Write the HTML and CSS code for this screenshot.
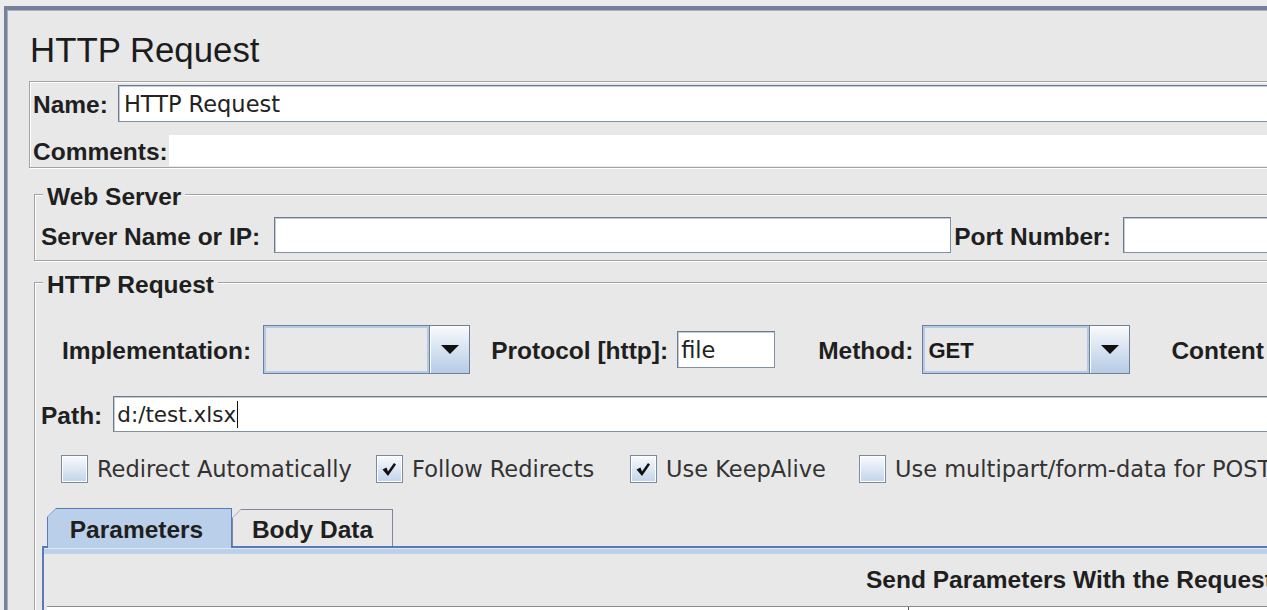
FILE: index.html
```html
<!DOCTYPE html>
<html>
<head>
<meta charset="utf-8">
<title>HTTP Request</title>
<link rel="stylesheet" href="styles.css">
</head>
<body>
<div class="frame">
  <h1 class="title">HTTP Request</h1>

  <div class="namebox">
    <div class="row name-row">
      <span class="lbl name-lbl">Name:</span>
      <div class="input grow name-input">HTTP Request</div>
    </div>
    <div class="row comments-row">
      <span class="lbl">Comments:</span>
      <div class="textarea grow"></div>
    </div>
  </div>

  <fieldset class="group web">
    <legend>Web Server</legend>
    <div class="row server-row">
      <span class="lbl">Server Name or IP:</span>
      <div class="input server-input"></div>
      <span class="lbl port-lbl">Port Number:</span>
      <div class="input grow port-input"></div>
    </div>
  </fieldset>

  <fieldset class="group req">
    <legend>HTTP Request</legend>
    <div class="row impl-row">
      <span class="lbl">Implementation:</span>
      <div class="combo impl-combo">
        <div class="combo-field"></div>
        <div class="combo-btn"><svg width="18" height="9" viewBox="0 0 18 9"><polygon points="0,0 18,0 9,9" fill="#111"/></svg></div>
      </div>
      <span class="lbl proto-lbl">Protocol [http]:</span>
      <div class="input proto-input">file</div>
      <span class="lbl method-lbl">Method:</span>
      <div class="combo method-combo">
        <div class="combo-field">GET</div>
        <div class="combo-btn"><svg width="18" height="9" viewBox="0 0 18 9"><polygon points="0,0 18,0 9,9" fill="#111"/></svg></div>
      </div>
      <span class="lbl content-lbl">Content Encoding:</span>
    </div>

    <div class="row path-row">
      <span class="lbl">Path:</span>
      <div class="input grow path-input">d:/test.xlsx<span class="caret"></span></div>
    </div>

    <div class="checks">
      <div class="check"><span class="cb"></span><span class="cb-text">Redirect Automatically</span></div>
      <div class="check"><span class="cb"><svg width="25" height="26" viewBox="0 0 25 26"><polygon points="5.5,13.5 9.5,11.5 11,15.5 17,7 19,8.5 11,20" fill="#111"/></svg></span><span class="cb-text">Follow Redirects</span></div>
      <div class="check"><span class="cb"><svg width="25" height="26" viewBox="0 0 25 26"><polygon points="5.5,13.5 9.5,11.5 11,15.5 17,7 19,8.5 11,20" fill="#111"/></svg></span><span class="cb-text">Use KeepAlive</span></div>
      <div class="check"><span class="cb"></span><span class="cb-text">Use multipart/form-data for POST</span></div>
    </div>

    <div class="tabs">
      <div class="tab selected"><div class="tab-in">Parameters</div></div>
      <div class="tab"><div class="tab-in">Body Data</div></div>
    </div>
    <div class="panel">
      <div class="strip"></div>
      <div class="send">Send Parameters With the Request:</div>
      <div class="table"><div class="col"></div></div>
    </div>
  </fieldset>
</div>
</body>
</html>
```

FILE: styles.css
```css
html, body {
  margin: 0;
  padding: 0;
  height: 610px;
  overflow: hidden;
  background: #ececec;
}

.frame {
  width: 1600px;
  height: 700px;
  margin: 6px 0 0 4px;
  border-top: 4px solid #75839a;
  border-left: 3px solid #75839a;
  background: #e8e8e8;
  box-shadow: inset 1px 1px 0 #a7b1bf;
}

.title {
  margin: 20px 0 0 23px;
  font: normal 34.8px/40px "Liberation Sans", Arial, sans-serif;
  color: #1c1c1c;
}

.row {
  display: flex;
  align-items: center;
}

.grow {
  flex: 1;
  min-width: 0;
}

.lbl {
  padding-top: 3px;
  font: bold 24.5px/28px "Liberation Sans", Arial, sans-serif;
  color: #1f1f1f;
  white-space: nowrap;
}

.input {
  box-sizing: border-box;
  height: 36px;
  background: #fff;
  border: 1px solid #8190a5;
  border-top-color: #6c7a8f;
  border-left-color: #6c7a8f;
  box-shadow: inset 1px 1px 0 #c3cbd6;
  padding: 0 4px;
  display: flex;
  align-items: center;
  font: 22.5px "DejaVu Sans", sans-serif;
  color: #222;
  white-space: nowrap;
}

/* Name / Comments box */
.namebox {
  margin: 11px 0 0 22px;
  padding: 3px 0 0 3px;
  height: 82px;
  border: 1px solid #a3a3a3;
  box-shadow: inset 1px 1px 0 #fff, 1px 1px 0 #fff;
}

.name-row {
  height: 37px;
}

.name-row .input {
  height: 37px;
  margin-left: 10px;
  padding-left: 5px;
}

.comments-row {
  margin-top: 13px;
  height: 31px;
}

.textarea {
  height: 31px;
  background: #fff;
  margin-left: 1px;
}

/* Titled groups */
.group {
  margin: 12px 0 0 27px;
  padding: 9px 0 7px 6px;
  border: 1px solid #a3a3a3;
  box-shadow: inset 1px 1px 0 #fff, 1px 1px 0 #fff;
  min-width: 0;
}

.group legend {
  margin-left: 2px;
  padding: 6px 4px 0;
  font: bold 24.5px/22px "Liberation Sans", Arial, sans-serif;
  color: #1f1f1f;
  background: #e8e8e8;
}

.web {
  margin-top: 12px;
}

.server-row {
  height: 36px;
}

.server-input {
  width: 677px;
  margin-left: 14px;
}

.port-lbl {
  margin-left: 3px;
}

.port-input {
  margin-left: 12px;
}

.req {
  margin-top: 7px;
  padding: 29px 0 0 6px;
  height: 600px;
}

/* Implementation row */
.impl-row {
  height: 49px;
  margin-left: 21px;
}

.combo {
  box-sizing: border-box;
  height: 49px;
  display: flex;
  border: 1px solid #6e8099;
  background: #e8e8e8;
}

.impl-combo {
  width: 207px;
  margin-left: 12px;
}

.method-combo {
  width: 208px;
  margin-left: 9px;
}

.combo-field {
  flex: 1;
  border: 2px solid #b4cbe6;
  display: flex;
  align-items: center;
  padding: 2px 0 0 3px;
  font: bold 22px "Liberation Sans", Arial, sans-serif;
  color: #1a1a1a;
}

.combo-btn {
  width: 39px;
  border-left: 1px solid #6e8099;
  background: linear-gradient(#f8fafd, #b6cbe5);
  box-shadow: inset 1px 1px 0 #fff;
  display: flex;
  align-items: center;
  justify-content: center;
}

.proto-lbl {
  margin-left: 21px;
}

.proto-input {
  width: 98px;
  height: 37px;
  margin-left: 9px;
  padding-left: 3px;
}

.method-lbl {
  margin-left: 43px;
}

.content-lbl {
  margin-left: 41px;
}

/* Path */
.path-row {
  margin-top: 22px;
  height: 36px;
}

.path-input {
  margin-left: 11px;
  padding-left: 3px;
  font-size: 21.5px;
}

.caret {
  display: inline-block;
  width: 1px;
  height: 27px;
  background: #111;
  margin-left: 1px;
}

/* Checkboxes */
.checks {
  margin: 23px 0 0 20px;
  height: 28px;
  display: grid;
  grid-template-columns: 315px 254px 229px auto;
  align-items: center;
}

.check {
  display: flex;
  align-items: center;
  white-space: nowrap;
}

.cb {
  box-sizing: border-box;
  width: 27px;
  height: 28px;
  border: 1px solid #7a8aa2;
  background: linear-gradient(#f9fbfd, #c2d3e9);
  box-shadow: inset 0 0 0 1px #fff;
  display: flex;
  align-items: center;
  justify-content: center;
  flex: none;
}

.cb-text {
  margin-left: 9px;
  font: 22.5px "DejaVu Sans", sans-serif;
  color: #333;
}

/* Tabs */
.tabs {
  position: relative;
  z-index: 1;
  display: flex;
  align-items: flex-start;
  margin: 25px 0 -2px 6px;
  height: 40px;
}

.tab {
  box-sizing: border-box;
  padding: 1px 1px 0 1px;
  background: #80899a;
  clip-path: polygon(9px 0, 100% 0, 100% 100%, 0 100%, 0 9px);
}

.tab-in {
  box-sizing: border-box;
  height: 100%;
  padding-top: 3px;
  background: #e8e8e8;
  clip-path: polygon(7.6px 0, 100% 0, 100% 100%, 0 100%, 0 7.6px);
  display: flex;
  align-items: center;
  justify-content: center;
  font: bold 24.5px/28px "Liberation Sans", Arial, sans-serif;
  color: #1f1f1f;
}

.tab.selected {
  width: 185px;
  height: 40px;
  background: #5a79b9;
}

.tab.selected .tab-in {
  background: #bad0ea;
  padding-right: 6px;
}

.tab:not(.selected) {
  width: 161px;
  height: 37px;
  margin-top: 1px;
}

.panel {
  margin-left: 1px;
  height: 300px;
  border-top: 2px solid #5a79b9;
  border-left: 2px solid #5a79b9;
  background: #e8e8e8;
}

.strip {
  box-sizing: border-box;
  height: 6px;
  border-top: 1px solid #dfe9f5;
  background: #bbd1ea;
}

.send {
  margin-top: 12px;
  padding-left: 822px;
  font: bold 24.5px/28px "Liberation Sans", Arial, sans-serif;
  color: #1f1f1f;
  white-space: nowrap;
}

.table {
  margin: 12px 0 0 3px;
  height: 30px;
  border-top: 1px solid #8a8a8a;
  background: #fff;
}

.col {
  width: 861px;
  height: 100%;
  border-right: 1px solid #555;
}
```
